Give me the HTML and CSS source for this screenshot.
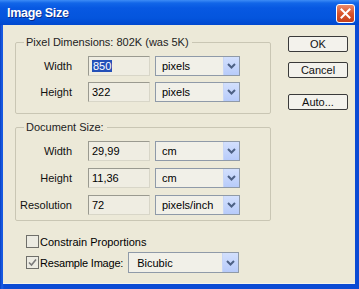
FILE: index.html
```html
<!DOCTYPE html>
<html>
<head>
<meta charset="utf-8">
<link rel="stylesheet" href="styles.css">
</head>
<body>
<div class="window">
  <div class="titlebar">
    <span class="title">Image Size</span>
    <div class="close"><svg width="11" height="11" viewBox="0 0 11 11"><path d="M1.5 1.5 L9.5 9.5 M9.5 1.5 L1.5 9.5" stroke="#fff" stroke-width="2" stroke-linecap="square"/></svg></div>
  </div>
  <div class="client">
    <div class="left">
      <fieldset class="group g1">
        <legend>Pixel Dimensions: 802K (was 5K)</legend>
        <div class="row">
          <span class="lbl">Width</span>
          <div class="field"><span class="sel">850</span></div>
          <div class="combo"><span>pixels</span><span class="arrow"><svg width="9" height="6" viewBox="0 0 9 6"><path d="M1 1 L4.5 4.5 L8 1" fill="none" stroke="#4d6185" stroke-width="2"/></svg></span></div>
        </div>
        <div class="row">
          <span class="lbl">Height</span>
          <div class="field">322</div>
          <div class="combo"><span>pixels</span><span class="arrow"><svg width="9" height="6" viewBox="0 0 9 6"><path d="M1 1 L4.5 4.5 L8 1" fill="none" stroke="#4d6185" stroke-width="2"/></svg></span></div>
        </div>
      </fieldset>
      <fieldset class="group g2">
        <legend>Document Size:</legend>
        <div class="row">
          <span class="lbl">Width</span>
          <div class="field">29,99</div>
          <div class="combo"><span>cm</span><span class="arrow"><svg width="9" height="6" viewBox="0 0 9 6"><path d="M1 1 L4.5 4.5 L8 1" fill="none" stroke="#4d6185" stroke-width="2"/></svg></span></div>
        </div>
        <div class="row">
          <span class="lbl">Height</span>
          <div class="field">11,36</div>
          <div class="combo"><span>cm</span><span class="arrow"><svg width="9" height="6" viewBox="0 0 9 6"><path d="M1 1 L4.5 4.5 L8 1" fill="none" stroke="#4d6185" stroke-width="2"/></svg></span></div>
        </div>
        <div class="row">
          <span class="lbl">Resolution</span>
          <div class="field">72</div>
          <div class="combo"><span>pixels/inch</span><span class="arrow"><svg width="9" height="6" viewBox="0 0 9 6"><path d="M1 1 L4.5 4.5 L8 1" fill="none" stroke="#4d6185" stroke-width="2"/></svg></span></div>
        </div>
      </fieldset>
      <div class="checks">
        <div class="check"><span class="box"></span><span>Constrain Proportions</span></div>
        <div class="check"><span class="box"><svg width="9" height="9" viewBox="0 0 9 9"><path d="M1 4.5 L3.5 7 L8 1.5" fill="none" stroke="#7a7a7a" stroke-width="1.6"/></svg></span><span class="rs">Resample Image:</span>
          <div class="combo wide"><span>Bicubic</span><span class="arrow"><svg width="9" height="6" viewBox="0 0 9 6"><path d="M1 1 L4.5 4.5 L8 1" fill="none" stroke="#4d6185" stroke-width="2"/></svg></span></div>
        </div>
      </div>
    </div>
    <div class="buttons">
      <div class="btn">OK</div>
      <div class="btn">Cancel</div>
      <div class="btn auto">Auto...</div>
    </div>
  </div>
</div>
</body>
</html>
```
FILE: styles.css
```css
html, body {
  margin: 0;
  padding: 0;
  background: #0a4fd6;
}
.window {
  width: 359px;
  height: 289px;
  box-sizing: border-box;
  background: linear-gradient(to right, #0a3fc0, #1a5ee6 2px, #0b4bd4 4px);
  display: flex;
  flex-direction: column;
  font-family: "Liberation Sans", Arial, sans-serif;
  font-size: 11px;
  color: #000;
}
.titlebar {
  height: 25px;
  flex: none;
  display: flex;
  align-items: center;
  justify-content: space-between;
  padding: 0 4px 0 7px;
  background: linear-gradient(to bottom, #3d8cf6 0, #1266e8 3px, #0758e2 8px, #0455dd 18px, #0048cf 25px);
}
.title {
  color: #fff;
  font-weight: bold;
  font-size: 12.5px;
  letter-spacing: -0.3px;
  text-shadow: 1px 1px 0 #0a2a8a;
}
.close {
  width: 19px;
  height: 19px;
  box-sizing: border-box;
  border: 1px solid #fff;
  border-radius: 3px;
  background: linear-gradient(to bottom, #ea8a6c, #d9542b 50%, #c4401c);
  display: flex;
  align-items: center;
  justify-content: center;
  margin-top: 1px;
}
.client {
  flex: 1;
  margin: 0 4px 5px 3px;
  background: #ece9d8;
  display: flex;
  padding: 10px 0 0 12px;
  border-bottom: 1px solid #f4f3ec;
}
.left {
  width: 256px;
  display: flex;
  flex-direction: column;
}
.group {
  margin: 0;
  padding: 0;
  border: 1px solid #c9c6b4;
  border-radius: 2px;
  min-width: 0;
}
.group legend {
  margin-left: 8px;
  padding: 0 3px 0 2px;
  line-height: 14px;
  color: #222;
}
.g1 {
  padding-top: 7px;
  padding-bottom: 11px;
  display: flex;
  flex-direction: column;
  gap: 6px;
}
.g2 {
  margin-top: 6px;
  padding-top: 7px;
  padding-bottom: 5px;
  display: flex;
  flex-direction: column;
  gap: 7px;
}
.row {
  display: flex;
  align-items: center;
  height: 20px;
}
.lbl {
  width: 56px;
  text-align: right;
  margin-right: 16px;
  color: #111;
}
.field {
  width: 62px;
  height: 20px;
  box-sizing: border-box;
  border: 1px solid #9a9a90;
  border-right-color: #d8d6c8;
  border-bottom-color: #d8d6c8;
  background: #efede2;
  padding: 0 0 0 3px;
  line-height: 18px;
  margin-right: 5px;
}
.sel {
  background: #2450b8;
  color: #fff;
  padding: 0 1px;
}
.combo {
  width: 85px;
  height: 20px;
  box-sizing: border-box;
  border: 1px solid #8f9aa8;
  background: #f1f0e8;
  display: flex;
  align-items: center;
  justify-content: space-between;
  padding-left: 6px;
}
.arrow {
  width: 15px;
  height: 18px;
  background: linear-gradient(to bottom, #d3e0fd, #b7cbfa);
  display: flex;
  align-items: center;
  justify-content: center;
  border-left: 1px solid #c8d6f6;
}
.checks {
  margin-top: 13px;
  padding-left: 11px;
  display: flex;
  flex-direction: column;
  gap: 3px;
}
.check {
  display: flex;
  align-items: center;
  height: 15px;
}
.check + .check {
  height: 21px;
}
.box {
  width: 13px;
  height: 13px;
  box-sizing: border-box;
  border: 1px solid #6f6f6a;
  background: #ecebe2;
  margin-right: 1px;
  display: flex;
  align-items: center;
  justify-content: center;
}
.rs {
  letter-spacing: -0.2px;
}
.combo.wide {
  width: 111px;
  height: 21px;
  margin-left: 5px;
  padding-left: 8px;
}
.combo.wide .arrow {
  height: 19px;
}
.buttons {
  margin-left: 17px;
  padding-top: 1px;
  display: flex;
  flex-direction: column;
  gap: 10px;
}
.btn {
  width: 60px;
  height: 16px;
  box-sizing: border-box;
  border: 1px solid #3a3a3a;
  border-radius: 2px;
  background: #f3f2ec;
  text-align: center;
  line-height: 14px;
  color: #111;
}
.btn.auto {
  margin-top: 6px;
}
```
